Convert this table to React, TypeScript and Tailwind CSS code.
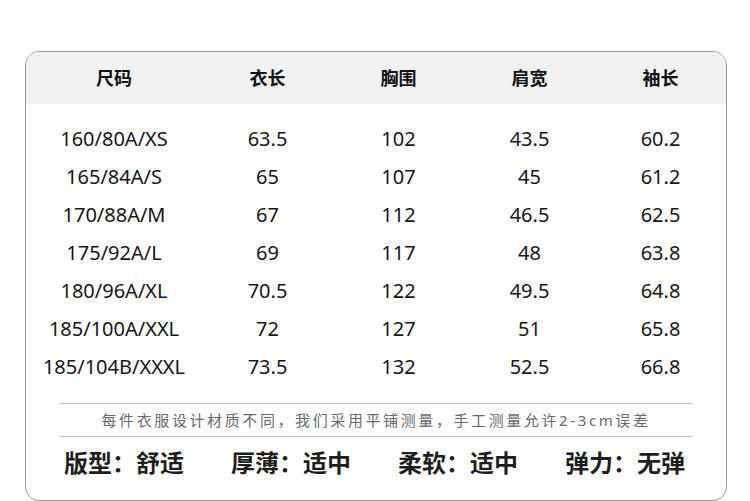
const HEADERS = ["尺码", "衣长", "胸围", "肩宽", "袖长"];

const ROWS: string[][] = [
  ["160/80A/XS", "63.5", "102", "43.5", "60.2"],
  ["165/84A/S", "65", "107", "45", "61.2"],
  ["170/88A/M", "67", "112", "46.5", "62.5"],
  ["175/92A/L", "69", "117", "48", "63.8"],
  ["180/96A/XL", "70.5", "122", "49.5", "64.8"],
  ["185/100A/XXL", "72", "127", "51", "65.8"],
  ["185/104B/XXXL", "73.5", "132", "52.5", "66.8"],
];

const TRAITS = [
  ["版型", "舒适"],
  ["厚薄", "适中"],
  ["柔软", "适中"],
  ["弹力", "无弹"],
];

const FONT = "font-['Noto_Sans','Noto_Sans_CJK_SC',sans-serif]";

export default function App() {
  return (
    <div className={`w-[750px] h-[501px] bg-white pt-[51px] pl-[25px] ${FONT}`}>
      <div className="w-[702px] h-[450px] rounded-[14px] border border-[#9a9a9a] overflow-hidden flex flex-col">
        {/* header band */}
        <div className="grid grid-cols-[176px_131px_131px_131px_131px] h-[52px] bg-[#f2f2f2] items-center">
          {HEADERS.map((h) => (
            <div key={h} className="text-center text-[18px] font-bold text-[#111]">
              {h}
            </div>
          ))}
        </div>

        <div className="flex flex-col pt-[16px]">
          {ROWS.map((row) => (
            <div
              key={row[0]}
              className="grid grid-cols-[176px_131px_131px_131px_131px] h-[38px] items-center"
            >
              {row.map((cell, i) => (
                <div key={i} className="text-center text-[20px] leading-none text-[#161616]">
                  {cell}
                </div>
              ))}
            </div>
          ))}
        </div>

        <div className="mx-[33px] mt-[17px] border-t border-b border-[#c4c4c4] h-[34px] flex items-center justify-center">
          <span className="text-[15px] tracking-[2.6px] text-[#6a6a6a]">
            每件衣服设计材质不同，我们采用平铺测量，手工测量允许2-3cm误差
          </span>
        </div>

        <div className="flex pl-[38px] gap-[40px] mt-[14px]">
          {TRAITS.map(([k, v]) => (
            <div key={k} className="w-[127px] text-[24px] font-semibold text-[#1e1e1e] whitespace-nowrap leading-none">
              {k}：{v}
            </div>
          ))}
        </div>
      </div>
    </div>
  );
}
